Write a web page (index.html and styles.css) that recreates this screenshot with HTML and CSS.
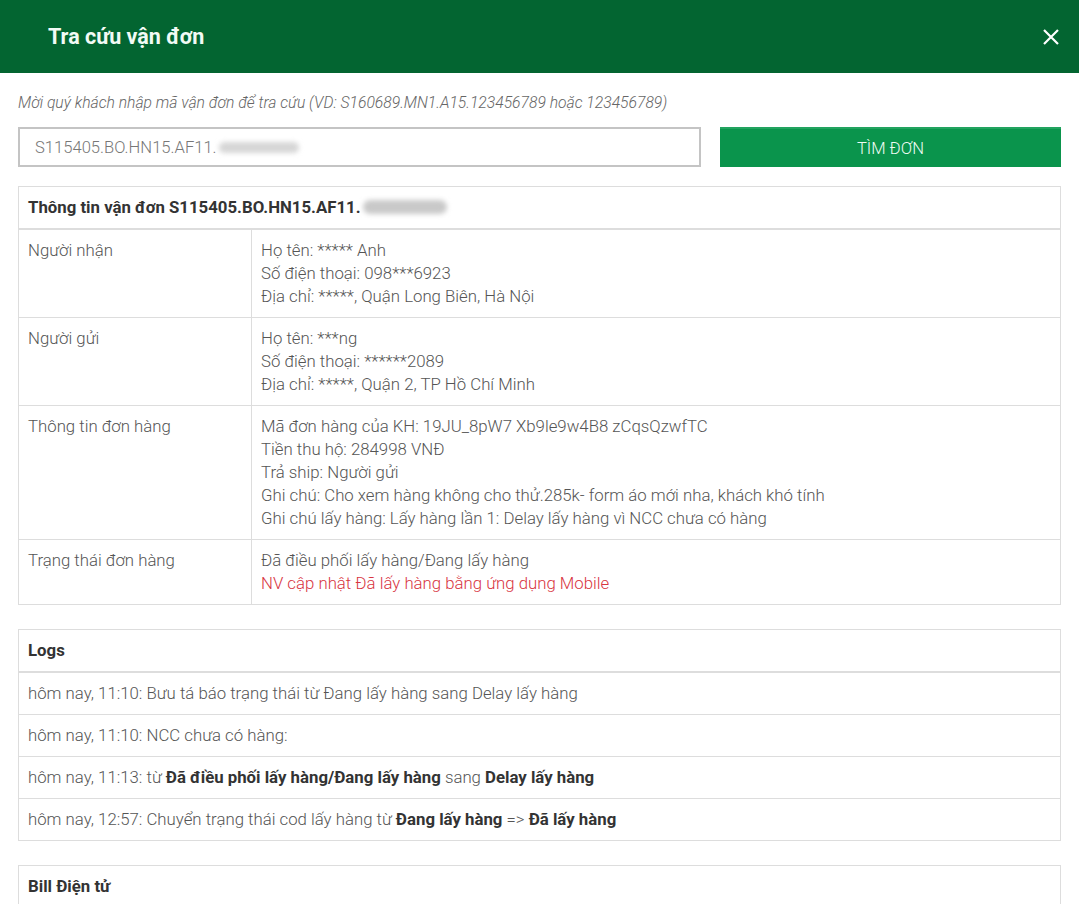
FILE: index.html
```html
<!DOCTYPE html>
<html lang="vi">
<head>
<meta charset="utf-8">
<title>Tra cứu vận đơn</title>
<link rel="stylesheet" href="styles.css">
</head>
<body>
<div class="modal">
  <header class="modal-header">
    <h1 class="modal-title">Tra cứu vận đơn</h1>
    <button class="close-btn" aria-label="Đóng">
      <svg width="18" height="18" viewBox="0 0 18 18"><path d="M2 2 L16 16 M16 2 L2 16" stroke="#fff" stroke-width="2.2" fill="none"/></svg>
    </button>
  </header>
  <main class="modal-body">
    <p class="hint">Mời quý khách nhập mã vận đơn để tra cứu (VD: S160689.MN1.A15.123456789 hoặc 123456789)</p>
    <div class="search-row">
      <div class="search-input"><span>S115405.BO.HN15.AF11.</span><span class="blur blur-sm"></span></div>
      <button class="search-btn">TÌM ĐƠN</button>
    </div>

    <table class="info-table">
      <thead>
        <tr><th colspan="2">Thông tin vận đơn S115405.BO.HN15.AF11.<span class="blur blur-lg"></span></th></tr>
      </thead>
      <tbody>
        <tr>
          <td class="label">Người nhận</td>
          <td>Họ tên: ***** Anh<br>Số điện thoại: 098***6923<br>Địa chỉ: *****, Quận Long Biên, Hà Nội</td>
        </tr>
        <tr>
          <td class="label">Người gửi</td>
          <td>Họ tên: ***ng<br>Số điện thoại: ******2089<br>Địa chỉ: *****, Quận 2, TP Hồ Chí Minh</td>
        </tr>
        <tr>
          <td class="label">Thông tin đơn hàng</td>
          <td>Mã đơn hàng của KH: 19JU_8pW7 Xb9le9w4B8 zCqsQzwfTC<br>Tiền thu hộ: 284998 VNĐ<br>Trả ship: Người gửi<br>Ghi chú: Cho xem hàng không cho thử.285k- form áo mới nha, khách khó tính<br>Ghi chú lấy hàng: Lấy hàng lần 1: Delay lấy hàng vì NCC chưa có hàng</td>
        </tr>
        <tr>
          <td class="label">Trạng thái đơn hàng</td>
          <td>Đã điều phối lấy hàng/Đang lấy hàng<br><span class="red">NV cập nhật Đã lấy hàng bằng ứng dụng Mobile</span></td>
        </tr>
      </tbody>
    </table>

    <table class="info-table">
      <thead><tr><th>Logs</th></tr></thead>
      <tbody>
        <tr><td>hôm nay, 11:10: Bưu tá báo trạng thái từ Đang lấy hàng sang Delay lấy hàng</td></tr>
        <tr><td>hôm nay, 11:10: NCC chưa có hàng:</td></tr>
        <tr><td>hôm nay, 11:13: từ <b>Đã điều phối lấy hàng/Đang lấy hàng</b> sang <b>Delay lấy hàng</b></td></tr>
        <tr><td>hôm nay, 12:57: Chuyển trạng thái cod lấy hàng từ <b>Đang lấy hàng</b> =&gt; <b>Đã lấy hàng</b></td></tr>
      </tbody>
    </table>

    <table class="info-table">
      <thead><tr><th>Bill Điện tử</th></tr></thead>
      <tbody>
        <tr><td>&nbsp;</td></tr>
      </tbody>
    </table>
  </main>
</div>
</body>
</html>
```

FILE: styles.css
```css
html, body {
  margin: 0;
  padding: 0;
  background: #fff;
}
body {
  font-family: Roboto, "Liberation Sans", Arial, sans-serif;
  color: #555;
  font-size: 16.8px;
  font-weight: 300;
  overflow: hidden;
  height: 904px;
}
.modal-header {
  height: 73px;
  background: #036531;
  display: flex;
  align-items: center;
  justify-content: space-between;
  padding: 0 19px 0 48px;
}
.modal-title {
  margin: 0;
  color: #f2fbf5;
  font-size: 21.5px;
  font-weight: 700;
  letter-spacing: 0;
}
.close-btn {
  background: none;
  border: 0;
  padding: 0;
  width: 18px;
  height: 18px;
  display: flex;
}
.modal-body {
  padding: 0 18px;
}
.hint {
  margin: 20px 0 0;
  font-size: 15.7px;
  font-style: italic;
  color: #666;
  line-height: 20px;
  font-weight: 300;
}
.search-row {
  display: grid;
  grid-template-columns: 683px 1fr;
  gap: 19px;
  margin-top: 14px;
  height: 40px;
}
.search-input {
  border: 2px solid #c4c4c4;
  display: flex;
  align-items: center;
  padding: 0 15px;
  color: #777;
  font-size: 16.6px;
  box-sizing: border-box;
}
.search-btn {
  background: #0a944c;
  border: 0;
  border-top: 2px solid #22a35f;
  color: #eefbf3;
  font-family: Roboto, "Liberation Sans", Arial, sans-serif;
  font-size: 16.6px;
  font-weight: 300;
  padding: 0;
}
.blur {
  display: inline-block;
  background: #c9c9c9;
  border-radius: 8px;
  filter: blur(2.5px);
  vertical-align: middle;
}
.blur-sm {
  width: 80px;
  height: 11px;
  margin-left: 2px;
  background: #d6d6d6;
}
.blur-lg {
  width: 84px;
  height: 14px;
  margin-left: 2px;
  margin-top: -3px;
}
.info-table {
  width: 100%;
  border-collapse: collapse;
  margin-top: 19px;
  margin-bottom: 24px;
  line-height: 23px;
}
.info-table th {
  text-align: left;
  color: #333;
  font-weight: 700;
  padding: 9px 9px 9px;
  border: 1px solid #ddd;
  border-bottom: 2px solid #ddd;
}
.info-table td {
  border: 1px solid #ddd;
  padding: 9px 9px;
  vertical-align: top;
}
.info-table td.label {
  width: 214px;
}
.info-table b {
  color: #333;
  font-weight: 700;
}
.red {
  color: #d8353f;
}
```
